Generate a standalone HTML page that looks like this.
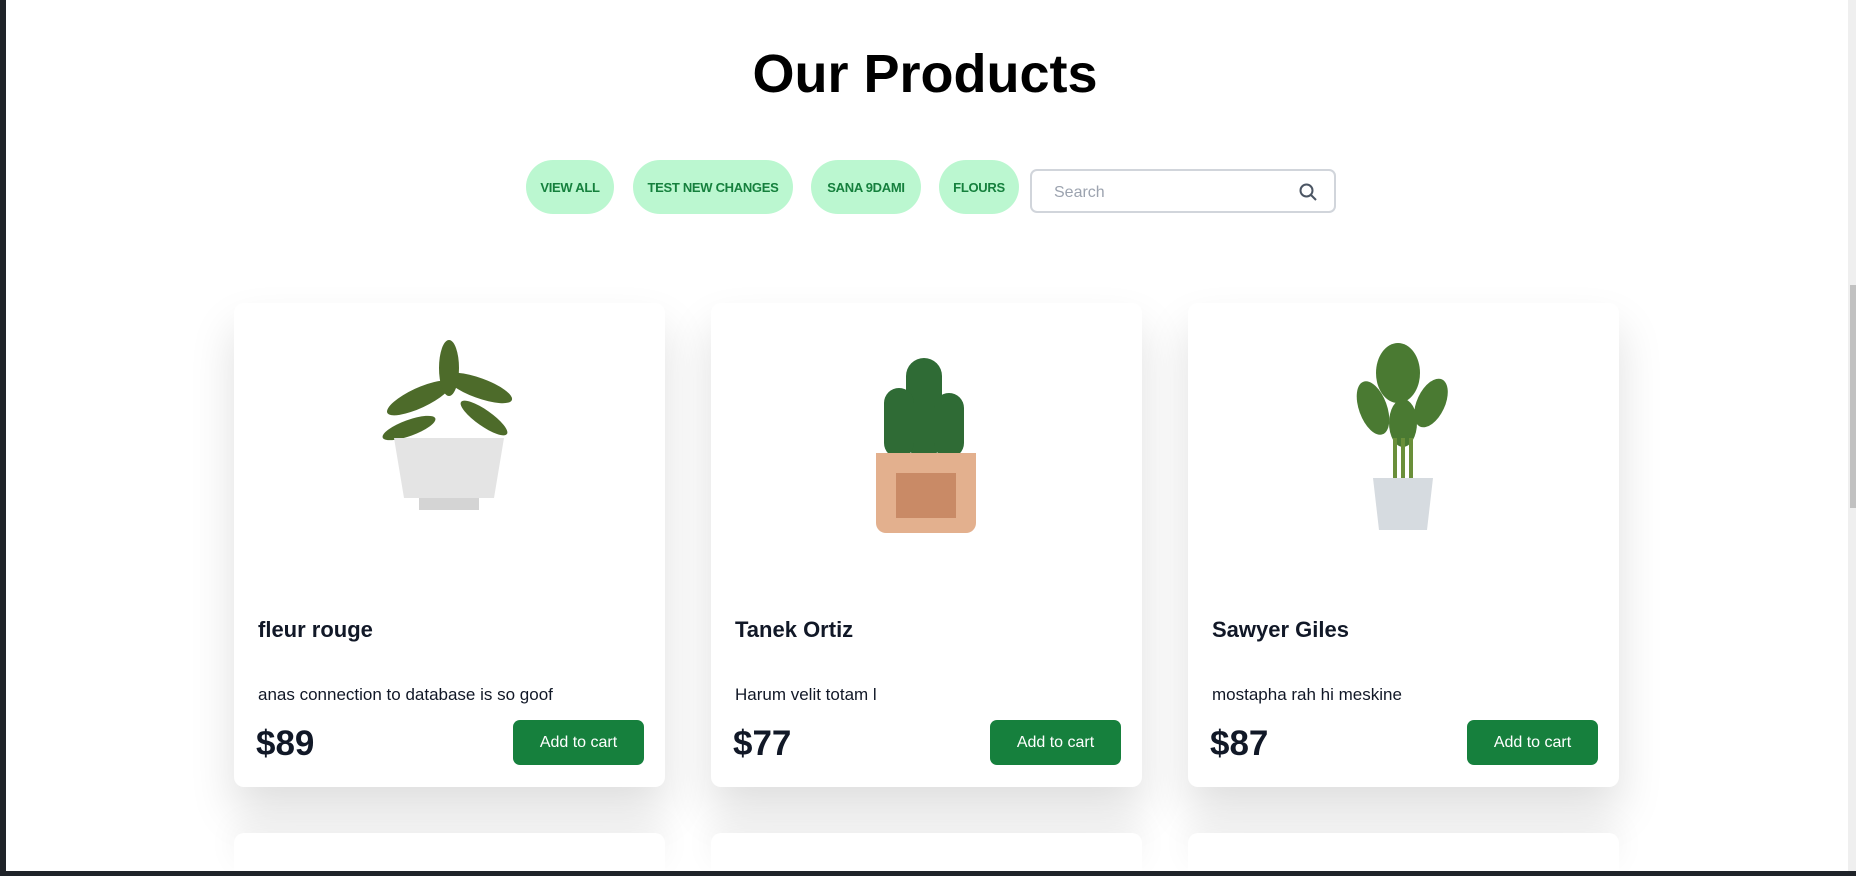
<!DOCTYPE html>
<html><head><meta charset="utf-8"><style>
*{box-sizing:border-box;margin:0;padding:0}
html,body{width:1856px;height:876px;overflow:hidden;background:#fff;font-family:"Liberation Sans",sans-serif}
#w{position:relative;width:1856px;height:876px;overflow:hidden;background:#fff}
.lb{position:absolute;left:0;top:0;width:6px;height:876px;background:#1f2329;z-index:5}
.bb{position:absolute;left:0;top:871px;width:1856px;height:5px;background:#1f2329;z-index:5}
.sb{position:absolute;left:1848px;top:0;width:8px;height:871px;background:#efefef;z-index:5}
.th{position:absolute;left:2px;top:285px;width:6px;height:223px;background:#c1c1c1}
h1{position:absolute;left:0;width:1850px;top:43px;text-align:center;font-size:54px;font-weight:bold;color:#000}
.pill{position:absolute;top:160px;height:54px;border-radius:27px;background:#bbf7d0;color:#15803d;font-weight:bold;font-size:13px;display:flex;align-items:center;justify-content:center;letter-spacing:-0.3px}
.search{position:absolute;left:1030px;top:169px;width:306px;height:44px;border:2px solid #d1d5db;border-radius:7px;color:#9ca3af;font-size:16px;padding:13px 22px}
.card{position:absolute;top:303px;width:431px;height:484px;background:#fff;border-radius:10px;box-shadow:0 25px 45px rgba(0,0,0,.13)}
.card.r2{top:833px;height:38px;border-radius:10px 10px 0 0;box-shadow:0 -10px 30px rgba(0,0,0,.05)}
.card h3{position:absolute;left:24px;top:314px;font-size:22px;font-weight:bold;color:#111827}
.card p{position:absolute;left:24px;top:382px;font-size:17px;color:#111827}
.card .pr{position:absolute;left:22px;top:421px;font-size:35px;font-weight:bold;color:#111827}
.card .btn{position:absolute;right:21px;top:417px;width:131px;height:45px;border-radius:7px;background:#16803d;color:#fff;font-size:16px;display:flex;align-items:center;justify-content:center}
.card svg{position:absolute;left:115px;top:35px}
</style></head><body><div id="w">
<div class="lb"></div><div class="sb"><div class="th"></div></div><div class="bb"></div>
<h1>Our Products</h1>
<div class="pill" style="left:526px;width:88px">VIEW ALL</div>
<div class="pill" style="left:633px;width:160px">TEST NEW CHANGES</div>
<div class="pill" style="left:811px;width:110px">SANA 9DAMI</div>
<div class="pill" style="left:939px;width:80px">FLOURS</div>
<div class="search">Search<svg style="position:absolute;right:16px;top:11px" width="20" height="20" viewBox="0 0 20 20"><circle cx="8.5" cy="8.5" r="6" fill="none" stroke="#4b5563" stroke-width="2"/><path d="M13 13l5 5" stroke="#4b5563" stroke-width="2"/></svg></div>

<div class="card" style="left:234px">
<svg width="200" height="200" viewBox="0 0 200 200"><g fill="#4d6b2a"><ellipse cx="70" cy="60" rx="35" ry="10" transform="rotate(-25 70 60)"/><ellipse cx="130" cy="50" rx="35" ry="10" transform="rotate(20 130 50)"/><ellipse cx="100" cy="30" rx="10" ry="28"/><ellipse cx="135" cy="80" rx="28" ry="8" transform="rotate(35 135 80)"/><ellipse cx="60" cy="90" rx="28" ry="8" transform="rotate(-20 60 90)"/></g><path d="M45 100h110l-10 60h-90z" fill="#e4e4e4"/><path d="M70 160h60v12h-60z" fill="#d4d4d4"/></svg>
<h3>fleur rouge</h3><p>anas connection to database is so goof</p><div class="pr">$89</div><div class="btn">Add to cart</div></div>

<div class="card" style="left:711px">
<svg width="200" height="200" viewBox="0 0 200 200"><g fill="#2f6b35"><rect x="80" y="20" width="36" height="100" rx="18"/><rect x="58" y="50" width="30" height="70" rx="15"/><rect x="108" y="55" width="30" height="65" rx="15"/></g><path d="M50 115h100v70a10 10 0 0 1-10 10h-80a10 10 0 0 1-10-10z" fill="#e3b08e"/><rect x="70" y="135" width="60" height="45" fill="#c98a66"/></svg>
<h3>Tanek Ortiz</h3><p>Harum velit totam l</p><div class="pr">$77</div><div class="btn">Add to cart</div></div>

<div class="card" style="left:1188px">
<svg width="200" height="200" viewBox="0 0 200 200"><g fill="#4a7a32"><ellipse cx="95" cy="35" rx="22" ry="30"/><ellipse cx="70" cy="70" rx="14" ry="28" transform="rotate(-20 70 70)"/><ellipse cx="128" cy="65" rx="14" ry="26" transform="rotate(25 128 65)"/><ellipse cx="100" cy="85" rx="14" ry="24"/></g><path d="M92 100v40M100 100v40M108 100v40" stroke="#6a8f3a" stroke-width="4"/><path d="M70 140h60l-6 52h-48z" fill="#d6dbe0"/></svg>
<h3>Sawyer Giles</h3><p>mostapha rah hi meskine</p><div class="pr">$87</div><div class="btn">Add to cart</div></div>

<div class="card r2" style="left:234px"></div>
<div class="card r2" style="left:711px"></div>
<div class="card r2" style="left:1188px"></div>
</div></body></html>
